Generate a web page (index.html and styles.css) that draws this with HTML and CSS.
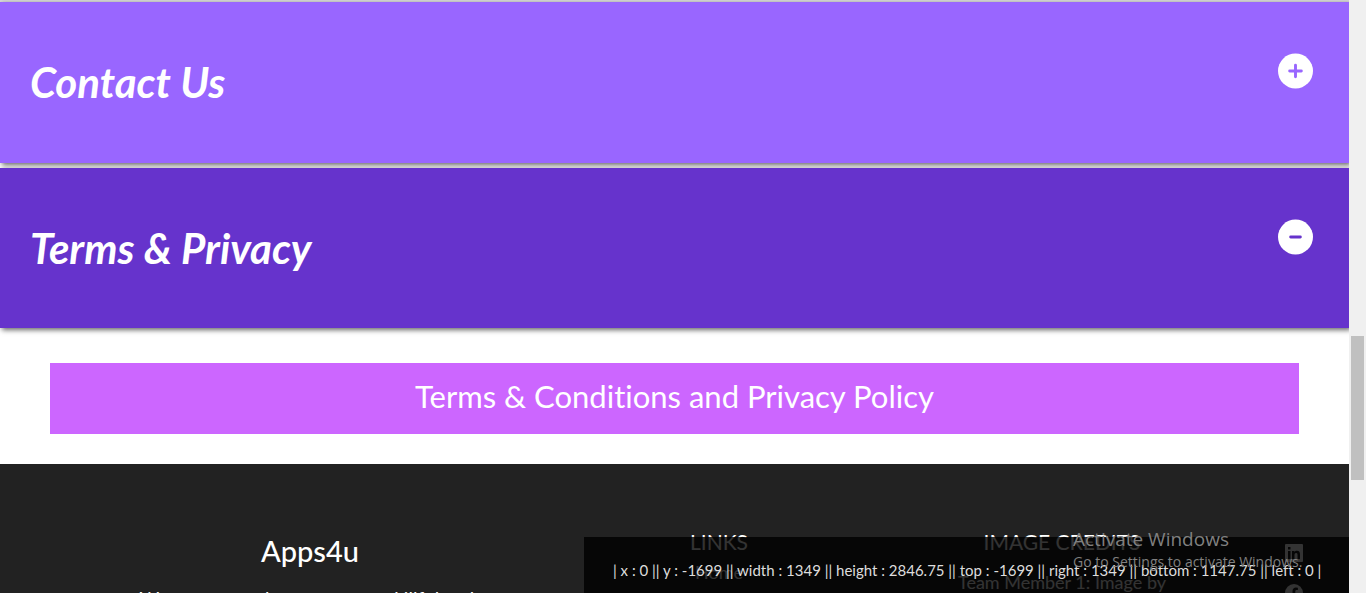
FILE: index.html
```html
<!DOCTYPE html>
<html lang="en">
<head>
<meta charset="utf-8">
<title>Apps4u</title>
<link rel="stylesheet" href="styles.css">
</head>
<body>
<div class="page">
  <main class="content">
    <section class="accordion">
      <button class="panel-toggle" type="button" aria-expanded="false">
        <span class="panel-title">Contact Us</span>
        <svg class="panel-icon" viewBox="0 0 36 36" aria-hidden="true"><circle cx="18" cy="18" r="18"/><path d="M18 12v12M12 18h12"/></svg>
      </button>
      <button class="panel-toggle open" type="button" aria-expanded="true">
        <span class="panel-title">Terms &amp; Privacy</span>
        <svg class="panel-icon" viewBox="0 0 36 36" aria-hidden="true"><circle cx="18" cy="18" r="18"/><path d="M13 18h10"/></svg>
      </button>
      <div class="panel-body">
        <a class="policy-link" href="#policy">Terms &amp; Conditions and Privacy Policy</a>
      </div>
    </section>
    <footer class="footer">
      <section class="about">
        <h2 class="brand">Apps4u</h2>
        <p class="about-text">We are a team here to create skillful tech</p>
      </section>
      <section class="links">
        <h3 class="footer-heading">LINKS</h3>
        <a class="footer-link" href="#home">Home</a>
      </section>
      <section class="credits">
        <h3 class="footer-heading">IMAGE CREDITS</h3>
        <p class="credit">Team Member 1: Image by</p>
      </section>
      <nav class="social" aria-label="Social">
        <a href="#linkedin" aria-label="LinkedIn"><svg class="social-icon" viewBox="0 0 18 18"><rect width="18" height="18" rx="1"/><path class="cut" d="M3 7h2.500v8H3zM3 3h2.500v2.500H3zM7 7h2.400v1.100C10 7.200 10.800 6.800 12 6.800c2.400 0 3 1.500 3 3.800V15h-2.500v-4c0-1.300-.3-2-1.300-2-1.200 0-1.700.8-1.700 2v4H7z"/></svg></a>
        <a href="#facebook" aria-label="Facebook"><svg class="social-icon" viewBox="0 0 18 18"><circle cx="9" cy="9" r="9"/><path class="cut" d="M7.500 18v-6.500H5.300V9h2.200V7c0-2.300 1.400-3.500 3.400-3.500l2 .2v2.200h-1.200c-1 0-1.400.6-1.400 1.300V9h2.500l-.4 2.500h-2.100V18z"/></svg></a>
      </nav>
    </footer>
  </main>
  <div class="scrollbar" aria-hidden="true"><div class="thumb"></div></div>
</div>
<output class="rect-info">| x : 0 || y : -1699 || width : 1349 || height : 2846.75 || top : -1699 || right : 1349 || bottom : 1147.75 || left : 0 |</output>
<div class="activation">
  <p class="activation-title">Activate Windows</p>
  <p class="activation-text">Go to Settings to activate Windows.</p>
</div>
</body>
</html>
```
FILE: styles.css
```css
* { box-sizing: border-box; }
body { margin: 0; font-family: Lato, "Liberation Sans", sans-serif; font-variant-ligatures: none; background: #fff; color: #fff; }
h2, h3, p { margin: 0; font-weight: 400; }
a { color: inherit; text-decoration: none; }
.page { display: flex; height: 100vh; overflow: hidden; }
.content { flex: 1; overflow: hidden; display: flex; flex-direction: column; }
.accordion { padding-top: 2px; background: linear-gradient(#d8d8d8, #d8d8d8) top / 100% 2px no-repeat; }
.panel-toggle {
  display: flex; justify-content: space-between; align-items: flex-start;
  width: 100%; height: 161px; margin: 0 0 5px; padding: 51px 36px 0 30px;
  border: 0; background: #9966ff; color: #fff; text-align: left;
  box-shadow: 2px 2px 5px rgba(0, 0, 0, 0.6);
}
.panel-toggle.open { height: 160px; margin-bottom: 0; background: #6633cc; }
.panel-title { font: italic 700 42px/58px Lato, sans-serif; }
.panel-icon { width: 35px; height: 36px; fill: #fff; stroke: #9966ff; stroke-width: 3; stroke-linecap: round; }
.open .panel-icon { stroke: #6633cc; }
.panel-icon circle { stroke: none; }
.panel-body { padding: 35px 50px 30px; }
.policy-link { display: block; padding-bottom: 4px; background: #cc66ff; text-align: center; font-size: 31px; line-height: 67px; }
.footer { flex: 1 0 130px; display: grid; grid-template-columns: 620px 198px 1fr 110px; background: #222; overflow: hidden; }
.about { padding-top: 67px; text-align: center; }
.brand { font: 500 29px/40px Lato, sans-serif; }
.about-text { margin-top: 15px; font-size: 19px; line-height: 26px; white-space: nowrap; }
.links, .credits { padding-top: 64px; text-align: center; }
.credits { padding-left: 67px; }
.footer-heading { font-size: 21px; line-height: 28px; }
.footer-link { display: block; font-size: 18px; line-height: 32px; }
.credit { margin-top: 12px; font-size: 18px; line-height: 28px; }
.social { padding: 80px 46px 0 0; display: flex; flex-direction: column; gap: 22px; align-items: flex-end; }
.social a { height: 18px; }
.social-icon { display: block; width: 18px; height: 18px; fill: #fff; }
.cut { fill: #222; }
.scrollbar { width: 17px; padding: 336px 2px 0; background: #f0f0f0; }
.thumb { height: 144px; background: #c0c0c0; }
.rect-info {
  position: absolute; right: 17px; bottom: 0; left: 584px; height: 56px; padding-left: 29px;
  background: rgba(0, 0, 0, 0.8); color: #ddd; font-size: 15px; line-height: 66px; white-space: nowrap; overflow: hidden;
}
.activation { position: absolute; top: 526px; left: 1073px; color: #808080; font-family: "Open Sans", sans-serif; white-space: nowrap; }
.activation-title { font-size: 19px; line-height: 26px; }
.activation-text { font-size: 14px; line-height: 20px; }
```
